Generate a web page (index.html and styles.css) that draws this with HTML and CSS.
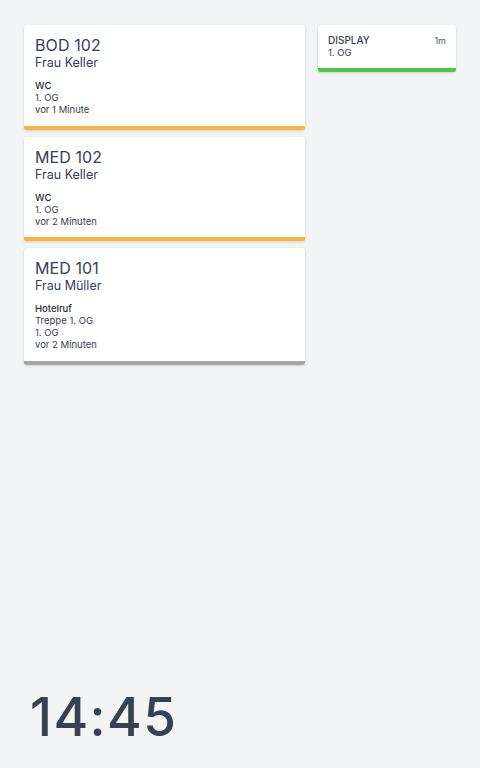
FILE: index.html
```html
<!DOCTYPE html>
<html lang="de">
<head>
  <meta charset="UTF-8" />
  <meta name="viewport" content="width=device-width, initial-scale=1.0"/>
  <title>Rufanzeige</title>
  <link rel="stylesheet" href="styles.css">
</head>
<body>
  <div id="screen">
    <main class="board">
      <section class="calls">
        <div class="call call--warn">
          <div class="call-room">BOD 102</div>
          <div class="call-name">Frau Keller</div>
          <div class="call-info">
            <div class="call-type">WC</div>
            <div>1. OG</div>
            <div>vor 1 Minute</div>
          </div>
        </div>
        <div class="call call--warn">
          <div class="call-room">MED 102</div>
          <div class="call-name">Frau Keller</div>
          <div class="call-info">
            <div class="call-type">WC</div>
            <div>1. OG</div>
            <div>vor 2 Minuten</div>
          </div>
        </div>
        <div class="call call--idle">
          <div class="call-room">MED 101</div>
          <div class="call-name">Frau Müller</div>
          <div class="call-info">
            <div class="call-type">Hotelruf</div>
            <div>Treppe 1. OG</div>
            <div>1. OG</div>
            <div>vor 2 Minuten</div>
          </div>
        </div>
      </section>
      <aside class="devices">
        <div class="device device--ok">
          <div class="device-head">
            <span class="device-name">DISPLAY</span>
            <span class="device-age">1m</span>
          </div>
          <div class="device-floor">1. OG</div>
        </div>
      </aside>
    </main>
    <footer class="clock">14:45</footer>
  </div>
</body>
</html>
```

FILE: styles.css
```css
:root {
  --bg: #f3f4f6;
  --card: #ffffff;
  --text: #374151;
  --text-strong: #1f2937;
  --muted: #4b5563;
  --warn: #fbb33c;
  --idle: #a6a6a6;
  --ok: #4cc742;
}
* { box-sizing: border-box; margin: 0; padding: 0; }
body {
  background: var(--bg);
  color: var(--text);
  font-family: Inter, "Noto Sans", sans-serif;
}
#screen {
  display: flex;
  flex-direction: column;
  min-height: 100vh;
}
.board {
  display: grid;
  grid-template-columns: 281px 138px;
  gap: 13px;
  align-items: start;
  padding: 25px 24px 0;
}
.calls {
  display: flex;
  flex-direction: column;
  gap: 7px;
}
.call,
.device {
  background: var(--card);
  border-radius: 3px;
  box-shadow: 0 1px 3px rgba(0,0,0,0.14), 0 0 1px rgba(0,0,0,0.08);
  border-bottom: 4px solid var(--idle);
}
.call { padding: 10px 12px 9.5px 11px; }
.call--warn { border-bottom-color: var(--warn); }
.call--idle { border-bottom-color: var(--idle); }
.call-room {
  font-size: 16px;
  line-height: 20px;
  letter-spacing: 0.1px;
}
.call-name {
  font-size: 12.5px;
  line-height: 16px;
}
.call-info {
  margin-top: 9px;
  font-size: 9.5px;
  line-height: 12px;
}
.call-type {
  font-weight: 500;
  color: var(--text-strong);
}
.device { padding: 9px 10px 8px; }
.device--ok { border-bottom-color: var(--ok); }
.device-head {
  display: flex;
  justify-content: space-between;
  align-items: baseline;
}
.device-name {
  font-size: 10px;
  line-height: 13px;
  font-weight: 500;
}
.device-age {
  font-size: 9px;
  color: var(--muted);
}
.device-floor {
  font-size: 9.5px;
  line-height: 12.7px;
}
.clock {
  margin-top: auto;
  padding: 0 24px 24px 30px;
  font-size: 53px;
  line-height: 53px;
  font-weight: 500;
  color: #374151;
  letter-spacing: 1.4px;
}
```
